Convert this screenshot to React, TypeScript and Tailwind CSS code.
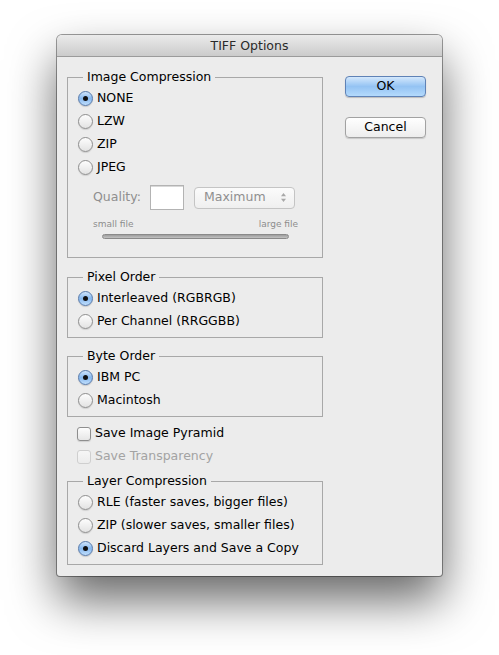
import React from 'react';

const font = "font-['DejaVu_Sans',_'Liberation_Sans',_sans-serif]";

const Radio: React.FC<{ checked?: boolean; label: string }> = ({ checked, label }) => (
  <div className="flex h-[23px] items-center">
    {checked ? (
      <span className="flex h-[15px] w-[15px] items-center justify-center rounded-full border border-[#5679aa] bg-linear-to-b from-[#d0e5fb] via-[#86b8ef] to-[#c0defc] shadow-[0_1px_1px_rgba(0,0,0,0.15)]">
        <span className="h-[5px] w-[5px] rounded-full bg-[#111]" />
      </span>
    ) : (
      <span className="h-[15px] w-[15px] rounded-full border border-[#8e8e8e] bg-linear-to-b from-[#fdfdfd] to-[#e3e3e3] shadow-[0_1px_1px_rgba(0,0,0,0.12)]" />
    )}
    <span className="ml-[4px] text-[12.5px] text-black">{label}</span>
  </div>
);

const Check: React.FC<{ label: string; disabled?: boolean }> = ({ label, disabled }) => (
  <div className="flex h-[23px] items-center">
    <span
      className={`h-[14px] w-[14px] rounded-[3px] border bg-linear-to-b ${
        disabled
          ? 'border-[#cfcfcf] from-[#f6f6f6] to-[#ececec]'
          : 'border-[#8e8e8e] from-[#fdfdfd] to-[#e6e6e6] shadow-[0_1px_1px_rgba(0,0,0,0.12)]'
      }`}
    />
    <span className={`ml-[4px] text-[12.5px] ${disabled ? 'text-[#a3a3a3]' : 'text-black'}`}>{label}</span>
  </div>
);

const Group: React.FC<{ title: string; className?: string; children: React.ReactNode }> = ({
  title,
  className,
  children,
}) => (
  <fieldset className={`border border-[#a8a8a8] pl-[10px] pr-[10px] pt-[2px] ${className ?? ''}`}>
    <legend className="ml-[5px] px-[4px] text-[12.5px] leading-[16px] text-black">{title}</legend>
    {children}
  </fieldset>
);

const App: React.FC = () => {
  return (
    <div className={`min-h-[655px] w-[499px] bg-white pl-[57px] pt-[35px] ${font}`}>
      <div className="flex h-[541px] w-[385px] flex-col rounded-t-[5px] rounded-b-[3px] bg-[#ececec] shadow-[0_0_0_1px_rgba(0,0,0,0.38),0_24px_48px_rgba(0,0,0,0.6)]">
        {/* title bar */}
        <div className="flex h-[22px] items-center justify-center rounded-t-[5px] border-b border-[#9b9b9b] bg-linear-to-b from-[#ebebeb] to-[#cbcbcb] pt-[2px]">
          <span className="text-[12.5px] text-[#2a2a2a]">TIFF Options</span>
        </div>

        <div className="flex flex-1 gap-[22px] pl-[10px] pr-[16px]">
          {/* left column */}
          <div className="flex w-[256px] flex-col pt-[12px]">
            <Group title="Image Compression" className="pb-[18px]">
              <Radio checked label="NONE" />
              <Radio label="LZW" />
              <Radio label="ZIP" />
              <Radio label="JPEG" />
              <div className="mt-[6px] flex h-[25px] items-center pl-[15px]">
                <span className="w-[57px] text-[12.5px] text-[#8f8f8f]">Quality:</span>
                <span className="h-[25px] w-[34px] border border-[#b3b3b3] bg-white shadow-[inset_0_1px_0_#d8d8d8]" />
                <span className="ml-[10px] flex h-[22px] w-[101px] items-center justify-between rounded-[4px] border border-[#c4c4c4] bg-linear-to-b from-[#fbfbfb] to-[#efefef] pl-[9px] pr-[7px]">
                  <span className="text-[12.5px] text-[#8f8f8f]">Maximum</span>
                  <svg width="7" height="11" viewBox="0 0 7 11">
                    <path d="M3.5 1 L6 4.2 L1 4.2 Z" fill="#a8a8a8" />
                    <path d="M3.5 10 L6 6.8 L1 6.8 Z" fill="#a8a8a8" />
                  </svg>
                </span>
              </div>
              <div className="mt-[8px] flex w-[220px] justify-between pl-[15px] text-[9px] leading-[12px] text-[#8c8c8c]">
                <span>small file</span>
                <span>large file</span>
              </div>
              <div className="ml-[24px] mt-[4px] h-[5px] w-[187px] rounded-full border border-[#8a8a8a] bg-linear-to-b from-[#9d9d9d] to-[#c2c2c2]" />
            </Group>

            <Group title="Pixel Order" className="mt-[11px] pb-[4px]">
              <Radio checked label="Interleaved (RGBRGB)" />
              <Radio label="Per Channel (RRGGBB)" />
            </Group>

            <Group title="Byte Order" className="mt-[10px] pb-[4px]">
              <Radio checked label="IBM PC" />
              <Radio label="Macintosh" />
            </Group>

            <div className="mt-[5px] pl-[10px]">
              <Check label="Save Image Pyramid" />
              <Check disabled label="Save Transparency" />
            </div>

            <Group title="Layer Compression" className="mt-[5px] pb-[4px]">
              <Radio label="RLE (faster saves, bigger files)" />
              <Radio label="ZIP (slower saves, smaller files)" />
              <Radio checked label="Discard Layers and Save a Copy" />
            </Group>
          </div>

          {/* buttons */}
          <div className="flex w-[81px] flex-col pt-[19px]">
            <button className="h-[21px] w-[81px] rounded-[4px] border border-[#5f82b6] bg-linear-to-b from-[#d4e8fc] via-[#94c3f3] to-[#b4dafc] text-[12.5px] text-black shadow-[0_1px_1px_rgba(0,0,0,0.2)]">
              OK
            </button>
            <button className="mt-[20px] h-[21px] w-[81px] rounded-[4px] border border-[#a2a2a2] bg-linear-to-b from-[#ffffff] to-[#ededed] text-[12.5px] text-black shadow-[0_1px_1px_rgba(0,0,0,0.15)]">
              Cancel
            </button>
          </div>
        </div>
      </div>
    </div>
  );
};

export default App;
